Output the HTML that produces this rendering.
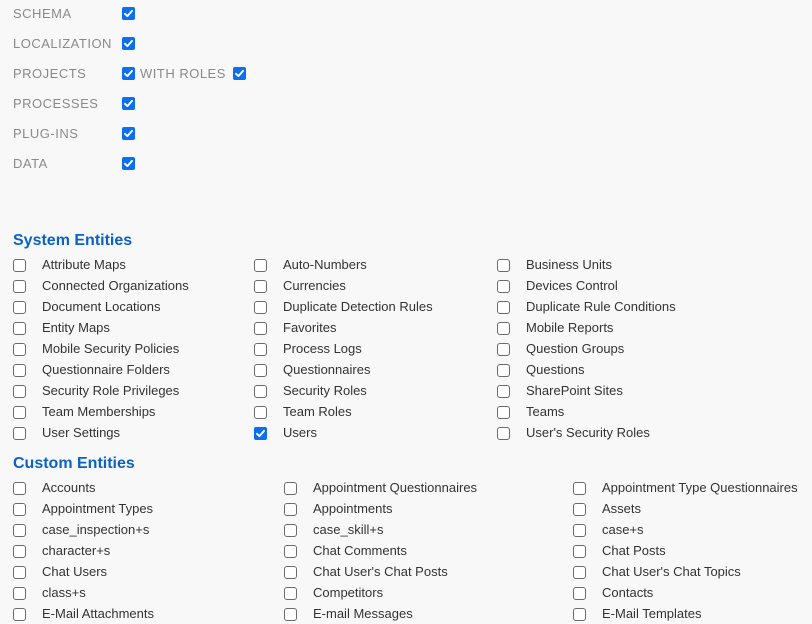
<!DOCTYPE html>
<html><head><meta charset="utf-8"><style>
html,body{margin:0;padding:0;background:#f8f8f8;width:812px;height:624px;overflow:hidden;position:relative;font-family:"Liberation Sans",sans-serif}
.l{position:absolute;font-size:13px;color:#8a8a8a;letter-spacing:0.5px;line-height:16px;margin-top:1px}
.cb{position:absolute;width:11px;height:11px;border:1px solid #6b6b6b;border-radius:3px;background:#fff}
.ck{position:absolute;width:13px;height:13px;border-radius:2px;background:#0b6ff0}
.ck svg{position:absolute;left:0;top:0}
.t{position:absolute;font-size:13px;color:#333;line-height:16px;white-space:nowrap;margin-top:1px}
h2{position:absolute;margin:2px 0 0;font-size:16px;font-weight:bold;color:#0b62c4;line-height:20px}
</style></head><body>
<svg width="0" height="0" style="position:absolute"><defs><symbol id="c" viewBox="0 0 13 13"><path d="M3 6.8 L5.4 9.1 L10 3.9" fill="none" stroke="#fff" stroke-width="1.9" stroke-linecap="round" stroke-linejoin="round"/></symbol></defs></svg>

<div class="l" style="left:13px;top:5px">SCHEMA</div><div class="ck" style="left:122px;top:7px"><svg width="13" height="13"><use href="#c"/></svg></div>
<div class="l" style="left:13px;top:35px">LOCALIZATION</div><div class="ck" style="left:122px;top:37px"><svg width="13" height="13"><use href="#c"/></svg></div>
<div class="l" style="left:13px;top:65px">PROJECTS</div><div class="ck" style="left:122px;top:67px"><svg width="13" height="13"><use href="#c"/></svg></div>
<div class="l" style="left:140px;top:65px">WITH ROLES</div><div class="ck" style="left:233px;top:67px"><svg width="13" height="13"><use href="#c"/></svg></div>
<div class="l" style="left:13px;top:95px">PROCESSES</div><div class="ck" style="left:122px;top:97px"><svg width="13" height="13"><use href="#c"/></svg></div>
<div class="l" style="left:13px;top:125px">PLUG-INS</div><div class="ck" style="left:122px;top:127px"><svg width="13" height="13"><use href="#c"/></svg></div>
<div class="l" style="left:13px;top:155px">DATA</div><div class="ck" style="left:122px;top:157px"><svg width="13" height="13"><use href="#c"/></svg></div>

<h2 style="left:13px;top:229px">System Entities</h2>
<div class="cb" style="left:13px;top:259px"></div><div class="t" style="left:42px;top:256px">Attribute Maps</div>
<div class="cb" style="left:13px;top:280px"></div><div class="t" style="left:42px;top:277px">Connected Organizations</div>
<div class="cb" style="left:13px;top:301px"></div><div class="t" style="left:42px;top:298px">Document Locations</div>
<div class="cb" style="left:13px;top:322px"></div><div class="t" style="left:42px;top:319px">Entity Maps</div>
<div class="cb" style="left:13px;top:343px"></div><div class="t" style="left:42px;top:340px">Mobile Security Policies</div>
<div class="cb" style="left:13px;top:364px"></div><div class="t" style="left:42px;top:361px">Questionnaire Folders</div>
<div class="cb" style="left:13px;top:385px"></div><div class="t" style="left:42px;top:382px">Security Role Privileges</div>
<div class="cb" style="left:13px;top:406px"></div><div class="t" style="left:42px;top:403px">Team Memberships</div>
<div class="cb" style="left:13px;top:427px"></div><div class="t" style="left:42px;top:424px">User Settings</div>
<div class="cb" style="left:254px;top:259px"></div><div class="t" style="left:283px;top:256px">Auto-Numbers</div>
<div class="cb" style="left:254px;top:280px"></div><div class="t" style="left:283px;top:277px">Currencies</div>
<div class="cb" style="left:254px;top:301px"></div><div class="t" style="left:283px;top:298px">Duplicate Detection Rules</div>
<div class="cb" style="left:254px;top:322px"></div><div class="t" style="left:283px;top:319px">Favorites</div>
<div class="cb" style="left:254px;top:343px"></div><div class="t" style="left:283px;top:340px">Process Logs</div>
<div class="cb" style="left:254px;top:364px"></div><div class="t" style="left:283px;top:361px">Questionnaires</div>
<div class="cb" style="left:254px;top:385px"></div><div class="t" style="left:283px;top:382px">Security Roles</div>
<div class="cb" style="left:254px;top:406px"></div><div class="t" style="left:283px;top:403px">Team Roles</div>
<div class="ck" style="left:254px;top:427px"><svg width="13" height="13"><use href="#c"/></svg></div><div class="t" style="left:283px;top:424px">Users</div>
<div class="cb" style="left:497px;top:259px"></div><div class="t" style="left:526px;top:256px">Business Units</div>
<div class="cb" style="left:497px;top:280px"></div><div class="t" style="left:526px;top:277px">Devices Control</div>
<div class="cb" style="left:497px;top:301px"></div><div class="t" style="left:526px;top:298px">Duplicate Rule Conditions</div>
<div class="cb" style="left:497px;top:322px"></div><div class="t" style="left:526px;top:319px">Mobile Reports</div>
<div class="cb" style="left:497px;top:343px"></div><div class="t" style="left:526px;top:340px">Question Groups</div>
<div class="cb" style="left:497px;top:364px"></div><div class="t" style="left:526px;top:361px">Questions</div>
<div class="cb" style="left:497px;top:385px"></div><div class="t" style="left:526px;top:382px">SharePoint Sites</div>
<div class="cb" style="left:497px;top:406px"></div><div class="t" style="left:526px;top:403px">Teams</div>
<div class="cb" style="left:497px;top:427px"></div><div class="t" style="left:526px;top:424px">User's Security Roles</div>

<h2 style="left:13px;top:452px">Custom Entities</h2>
<div class="cb" style="left:13px;top:482px"></div><div class="t" style="left:42px;top:479px">Accounts</div>
<div class="cb" style="left:13px;top:503px"></div><div class="t" style="left:42px;top:500px">Appointment Types</div>
<div class="cb" style="left:13px;top:524px"></div><div class="t" style="left:42px;top:521px">case_inspection+s</div>
<div class="cb" style="left:13px;top:545px"></div><div class="t" style="left:42px;top:542px">character+s</div>
<div class="cb" style="left:13px;top:566px"></div><div class="t" style="left:42px;top:563px">Chat Users</div>
<div class="cb" style="left:13px;top:587px"></div><div class="t" style="left:42px;top:584px">class+s</div>
<div class="cb" style="left:13px;top:608px"></div><div class="t" style="left:42px;top:605px">E-Mail Attachments</div>
<div class="cb" style="left:284px;top:482px"></div><div class="t" style="left:313px;top:479px">Appointment Questionnaires</div>
<div class="cb" style="left:284px;top:503px"></div><div class="t" style="left:313px;top:500px">Appointments</div>
<div class="cb" style="left:284px;top:524px"></div><div class="t" style="left:313px;top:521px">case_skill+s</div>
<div class="cb" style="left:284px;top:545px"></div><div class="t" style="left:313px;top:542px">Chat Comments</div>
<div class="cb" style="left:284px;top:566px"></div><div class="t" style="left:313px;top:563px">Chat User's Chat Posts</div>
<div class="cb" style="left:284px;top:587px"></div><div class="t" style="left:313px;top:584px">Competitors</div>
<div class="cb" style="left:284px;top:608px"></div><div class="t" style="left:313px;top:605px">E-mail Messages</div>
<div class="cb" style="left:573px;top:482px"></div><div class="t" style="left:602px;top:479px">Appointment Type Questionnaires</div>
<div class="cb" style="left:573px;top:503px"></div><div class="t" style="left:602px;top:500px">Assets</div>
<div class="cb" style="left:573px;top:524px"></div><div class="t" style="left:602px;top:521px">case+s</div>
<div class="cb" style="left:573px;top:545px"></div><div class="t" style="left:602px;top:542px">Chat Posts</div>
<div class="cb" style="left:573px;top:566px"></div><div class="t" style="left:602px;top:563px">Chat User's Chat Topics</div>
<div class="cb" style="left:573px;top:587px"></div><div class="t" style="left:602px;top:584px">Contacts</div>
<div class="cb" style="left:573px;top:608px"></div><div class="t" style="left:602px;top:605px">E-Mail Templates</div>
</body></html>
